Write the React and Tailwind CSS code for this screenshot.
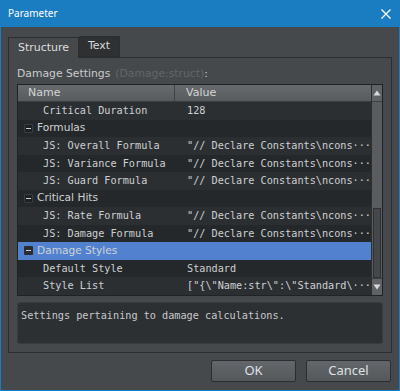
import React from 'react';

const mono = { fontFamily: '"DejaVu Sans Mono", "Liberation Mono", monospace' };
const ui = { fontFamily: '"Noto Sans", "Open Sans", sans-serif' };

const rows = [
    { name: 'Critical Duration', value: '128', indent: true },
    { name: 'Formulas', group: true },
    { name: 'JS: Overall Formula', value: '"// Declare Constants\\ncons···', indent: true },
    { name: 'JS: Variance Formula', value: '"// Declare Constants\\ncons···', indent: true },
    { name: 'JS: Guard Formula', value: '"// Declare Constants\\ncons···', indent: true },
    { name: 'Critical Hits', group: true },
    { name: 'JS: Rate Formula', value: '"// Declare Constants\\ncons···', indent: true },
    { name: 'JS: Damage Formula', value: '"// Declare Constants\\ncons···', indent: true },
    { name: 'Damage Styles', group: true, selected: true },
    { name: 'Default Style', value: 'Standard', indent: true },
    { name: 'Style List', value: '["{\\"Name:str\\":\\"Standard\\···', indent: true },
];

function MinusBox({ selected }) {
    return (
        <span
            className={`w-[9px] h-[9px] mr-[4px] flex items-center justify-center rounded-[1px] ${
                selected ? 'bg-[#2a2d30]' : 'bg-[#1e2022] border border-[#3a3d40]'
            }`}
        >
            <span className="w-[5px] h-[1px] bg-[#c9ccd0]" />
        </span>
    );
}

function Row({ row, index }) {
    const bg = row.selected ? 'bg-[#5282cf]' : index % 2 === 0 ? 'bg-[#2c2f32]' : 'bg-[#25282a]';
    return (
        <div className={`h-[17.5px] flex items-center ${bg}`}>
            <div className="w-[157px] flex items-center pl-[6px] shrink-0">
                {row.group ? (
                    <>
                        <MinusBox selected={row.selected} />
                        <span className="text-[10.6px] text-[#cfd2d5]">{row.name}</span>
                    </>
                ) : (
                    <span className="pl-[19px] text-[10.2px] text-[#cdd0d3] whitespace-nowrap" style={mono}>
                        {row.name}
                    </span>
                )}
            </div>
            {row.value && (
                <span className="pl-[12px] text-[10.2px] text-[#cdd0d3] whitespace-nowrap" style={mono}>
                    {row.value}
                </span>
            )}
        </div>
    );
}

export default function App() {
    return (
        <div
            className="w-[400px] h-[391px] flex flex-col bg-[#1a7cc1] text-[#d4d6d8]"
            style={{ fontFamily: '"DejaVu Sans", "Noto Sans", sans-serif' }}
        >
            <div className="h-[27px] flex items-center justify-between pl-[8px] pr-[9px]">
                <span className="text-[10px] text-white" style={ui}>Parameter</span>
                <svg width="10" height="10" viewBox="0 0 10 10">
                    <path d="M0.5 0.5 L9.5 9.5 M9.5 0.5 L0.5 9.5" stroke="#ffffff" strokeWidth="1.3" />
                </svg>
            </div>
            <div className="flex-1 mx-[1px] mb-[1px] bg-[#46494c] pt-[9px] pl-[7px] pr-[7px] flex flex-col">
                <div className="flex h-[21px]">
                    <div className="w-[71px] flex items-center justify-center border border-b-0 border-[#2b2d2f] bg-[#46494c] text-[11px] text-[#dcdedf] relative top-[1px]">
                        Structure
                    </div>
                    <div className="w-[41px] flex items-center justify-center border border-l-0 border-[#2b2d2f] bg-[#2e3032] text-[11px] text-[#d8dadc]">
                        Text
                    </div>
                </div>
                <div className="h-[296px] border border-[#2b2d2f] flex flex-col px-[8px]">
                    <div className="h-[26px] flex items-center pt-[6px] text-[10.8px]">
                        <span className="text-[#c9ccce]">Damage Settings</span>
                        <span className="ml-[5px] text-[#62666a]">(Damage:struct)</span>
                        <span className="text-[#c9ccce]">:</span>
                    </div>
                    <div className="h-[212px] flex border border-[#202224]">
                        <div className="flex-1 flex flex-col bg-[#26292b]">
                            <div className="h-[17px] flex bg-gradient-to-b from-[#686b6e] to-[#585b5e] border-b border-[#3a3d40] text-[11px] text-[#d3d5d7]">
                                <div className="w-[157px] pl-[10px] flex items-center border-r border-[#3f4245]">Name</div>
                                <div className="pl-[11px] flex items-center">Value</div>
                            </div>
                            {rows.map((row, i) => (
                                <Row key={row.name} row={row} index={i} />
                            ))}
                        </div>
                        <div className="w-[16px] flex flex-col bg-[#5a5d60] border-l border-[#2c2e30]">
                            <div className="h-[17px] flex items-center justify-center bg-[#606366] border-b border-[#3c3f42]">
                                <svg width="8" height="6" viewBox="0 0 8 6">
                                    <path d="M4 0.5 L7.5 5.5 L0.5 5.5 Z" fill="#d8dadc" />
                                </svg>
                            </div>
                            <div className="flex-1 flex flex-col justify-end">
                                <div className="h-[70px] mx-[1px] bg-[#45484b] border border-[#2e3133]" />
                            </div>
                            <div className="h-[17px] flex items-center justify-center bg-[#606366] border-t border-[#3c3f42]">
                                <svg width="8" height="6" viewBox="0 0 8 6">
                                    <path d="M0.5 0.5 L7.5 0.5 L4 5.5 Z" fill="#d8dadc" />
                                </svg>
                            </div>
                        </div>
                    </div>
                    <div
                        className="mt-[6px] h-[42px] rounded-[3px] border border-[#3a3d40] bg-[#2d3032] px-[3px] pt-[5px] text-[10.2px] leading-[15px] text-[#c6c9cc] whitespace-nowrap"
                        style={mono}
                    >
                        Settings pertaining to damage calculations.
                    </div>
                </div>
                <div className="flex justify-end gap-[10px] mt-[7px] pr-[1px]" style={ui}>
                    <button className="w-[85px] h-[22px] rounded-[2px] border border-[#2b2d2f] bg-gradient-to-b from-[#63666a] to-[#55585b] text-[13px] text-[#dfe1e3]">
                        OK
                    </button>
                    <button className="w-[85px] h-[22px] rounded-[2px] border border-[#2b2d2f] bg-gradient-to-b from-[#63666a] to-[#55585b] text-[13px] text-[#dfe1e3]">
                        Cancel
                    </button>
                </div>
            </div>
        </div>
    );
}
